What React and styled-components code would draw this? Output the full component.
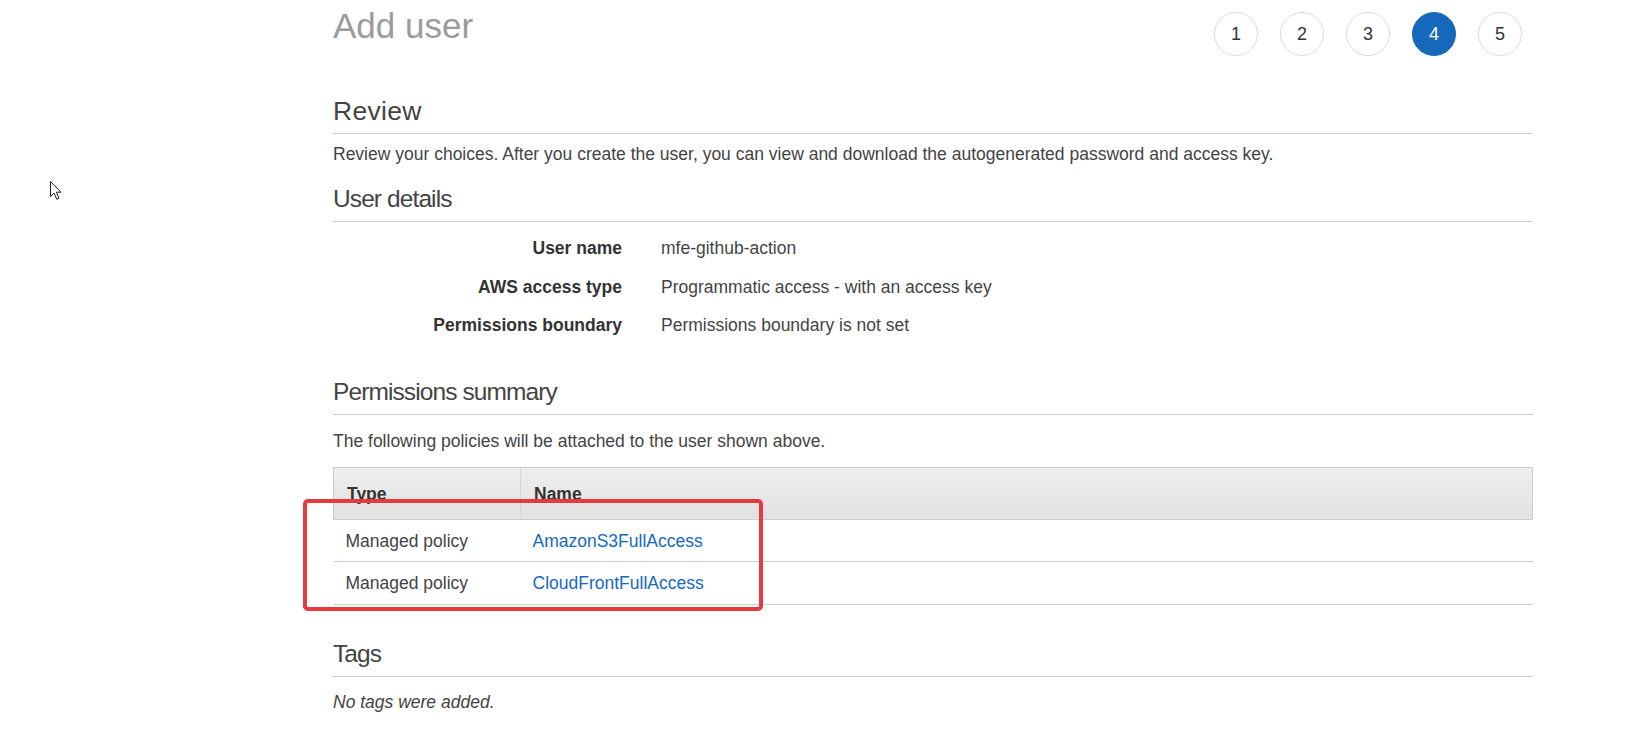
import React from "react";
import styled, { createGlobalStyle } from "styled-components";

const GlobalStyle = createGlobalStyle`
  body {
    margin: 0;
    background: #fff;
    font-family: "Liberation Sans", Arial, sans-serif;
    color: #444;
  }
`;

const Page = styled.div`
  position: relative;
  min-height: 738px;
`;

const Content = styled.div`
  margin-left: 333px;
  width: 1200px;
`;

const Header = styled.div`
  display: flex;
  justify-content: space-between;
  align-items: flex-start;
`;

const Title = styled.h1`
  margin: 6px 0 0;
  font-size: 35px;
  line-height: 40px;
  font-weight: normal;
  color: #9b9b9b;
`;

const Steps = styled.div`
  display: flex;
  gap: 22px;
  margin: 12px 11px 0 0;
`;

const Step = styled.div`
  width: 42px;
  height: 42px;
  border-radius: 50%;
  border: 1px solid ${(p) => (p.$active ? "#1668bd" : "#dcdcdc")};
  background: ${(p) => (p.$active ? "#1668bd" : "#fff")};
  color: ${(p) => (p.$active ? "#fff" : "#333")};
  display: flex;
  align-items: center;
  justify-content: center;
  font-size: 18px;
`;

const SectionTitle = styled.h2`
  margin: ${(p) => p.$top}px 0 0;
  padding-bottom: 7px;
  border-bottom: 1px solid #cccccc;
  font-size: ${(p) => (p.$large ? "26.5px" : "24.5px")};
  letter-spacing: ${(p) => (p.$large ? "0.3px" : "-0.9px")};
  line-height: 30px;
  font-weight: normal;
  color: #444;
`;

const Text = styled.p`
  margin: ${(p) => p.$top}px 0 0;
  font-size: 17.5px;
  line-height: 20px;
  color: #444;
`;

const DetailGrid = styled.div`
  display: grid;
  grid-template-columns: 289px 1fr;
  column-gap: 39px;
  row-gap: 18.5px;
  margin-top: 16px;
  font-size: 17.5px;
  line-height: 20px;
`;

const Label = styled.div`
  text-align: right;
  font-weight: bold;
  color: #333;
`;

const Value = styled.div`
  color: #444;
`;

const TableWrap = styled.div`
  position: relative;
  margin-top: 16px;
`;

const Table = styled.table`
  width: 100%;
  table-layout: fixed;
  border-collapse: collapse;
  font-size: 17.5px;
  line-height: 20px;
`;

const Th = styled.th`
  text-align: left;
  font-weight: bold;
  color: #333;
  padding: 16px 13px 15px;
  background: linear-gradient(#eeeeee, #e1e1e1);
  border-top: 1px solid #cccccc;
  border-bottom: 1px solid #cccccc;
  border-left: 1px solid ${(p) => (p.$first ? "#cccccc" : "#d6d6d6")};
  border-right: ${(p) => (p.$last ? "1px solid #cccccc" : "none")};
`;

const Td = styled.td`
  padding: 11px 12px 10.5px;
  border-bottom: 1px solid #cccccc;
  color: #444;
`;

const PolicyLink = styled.a`
  color: #1469c2;
  text-decoration: none;
`;

const Highlight = styled.div`
  position: absolute;
  left: -30px;
  top: 32px;
  width: 460px;
  height: 112px;
  box-sizing: border-box;
  border: 4px solid #e63a3c;
  border-radius: 5px;
  pointer-events: none;
`;

const Cursor = styled.svg`
  position: absolute;
  left: 49px;
  top: 180px;
`;

const details = [
  ["User name", "mfe-github-action"],
  ["AWS access type", "Programmatic access - with an access key"],
  ["Permissions boundary", "Permissions boundary is not set"],
];

const policies = ["AmazonS3FullAccess", "CloudFrontFullAccess"];

export default function App() {
  return (
    <Page>
      <GlobalStyle />
      <Cursor width="14" height="21" viewBox="0 0 14 21">
        <path
          d="M1.5 1.5 L1.5 16.5 L5 13 L7.8 19.3 L10 18.3 L7.3 12.2 L12 12.2 Z"
          fill="#fff"
          stroke="#222"
          strokeWidth="1"
          strokeLinejoin="round"
        />
      </Cursor>
      <Content>
        <Header>
          <Title>Add user</Title>
          <Steps>
            {[1, 2, 3, 4, 5].map((n) => (
              <Step key={n} $active={n === 4}>
                {n}
              </Step>
            ))}
          </Steps>
        </Header>

        <SectionTitle $top={40} $large>
          Review
        </SectionTitle>
        <Text $top={10}>
          Review your choices. After you create the user, you can view and
          download the autogenerated password and access key.
        </Text>

        <SectionTitle $top={20}>User details</SectionTitle>
        <DetailGrid>
          {details.map(([label, value]) => (
            <React.Fragment key={label}>
              <Label>{label}</Label>
              <Value>{value}</Value>
            </React.Fragment>
          ))}
        </DetailGrid>

        <SectionTitle $top={42}>Permissions summary</SectionTitle>
        <Text $top={15.5}>
          The following policies will be attached to the user shown above.
        </Text>
        <TableWrap>
          <Table>
            <colgroup>
              <col style={{ width: 187 }} />
              <col />
            </colgroup>
            <thead>
              <tr>
                <Th $first>Type</Th>
                <Th $last>Name</Th>
              </tr>
            </thead>
            <tbody>
              {policies.map((p) => (
                <tr key={p}>
                  <Td>Managed policy</Td>
                  <Td>
                    <PolicyLink href="#">{p}</PolicyLink>
                  </Td>
                </tr>
              ))}
            </tbody>
          </Table>
          <Highlight />
        </TableWrap>

        <SectionTitle $top={34}>Tags</SectionTitle>
        <Text $top={15}>
          <i>No tags were added.</i>
        </Text>
      </Content>
    </Page>
  );
}
